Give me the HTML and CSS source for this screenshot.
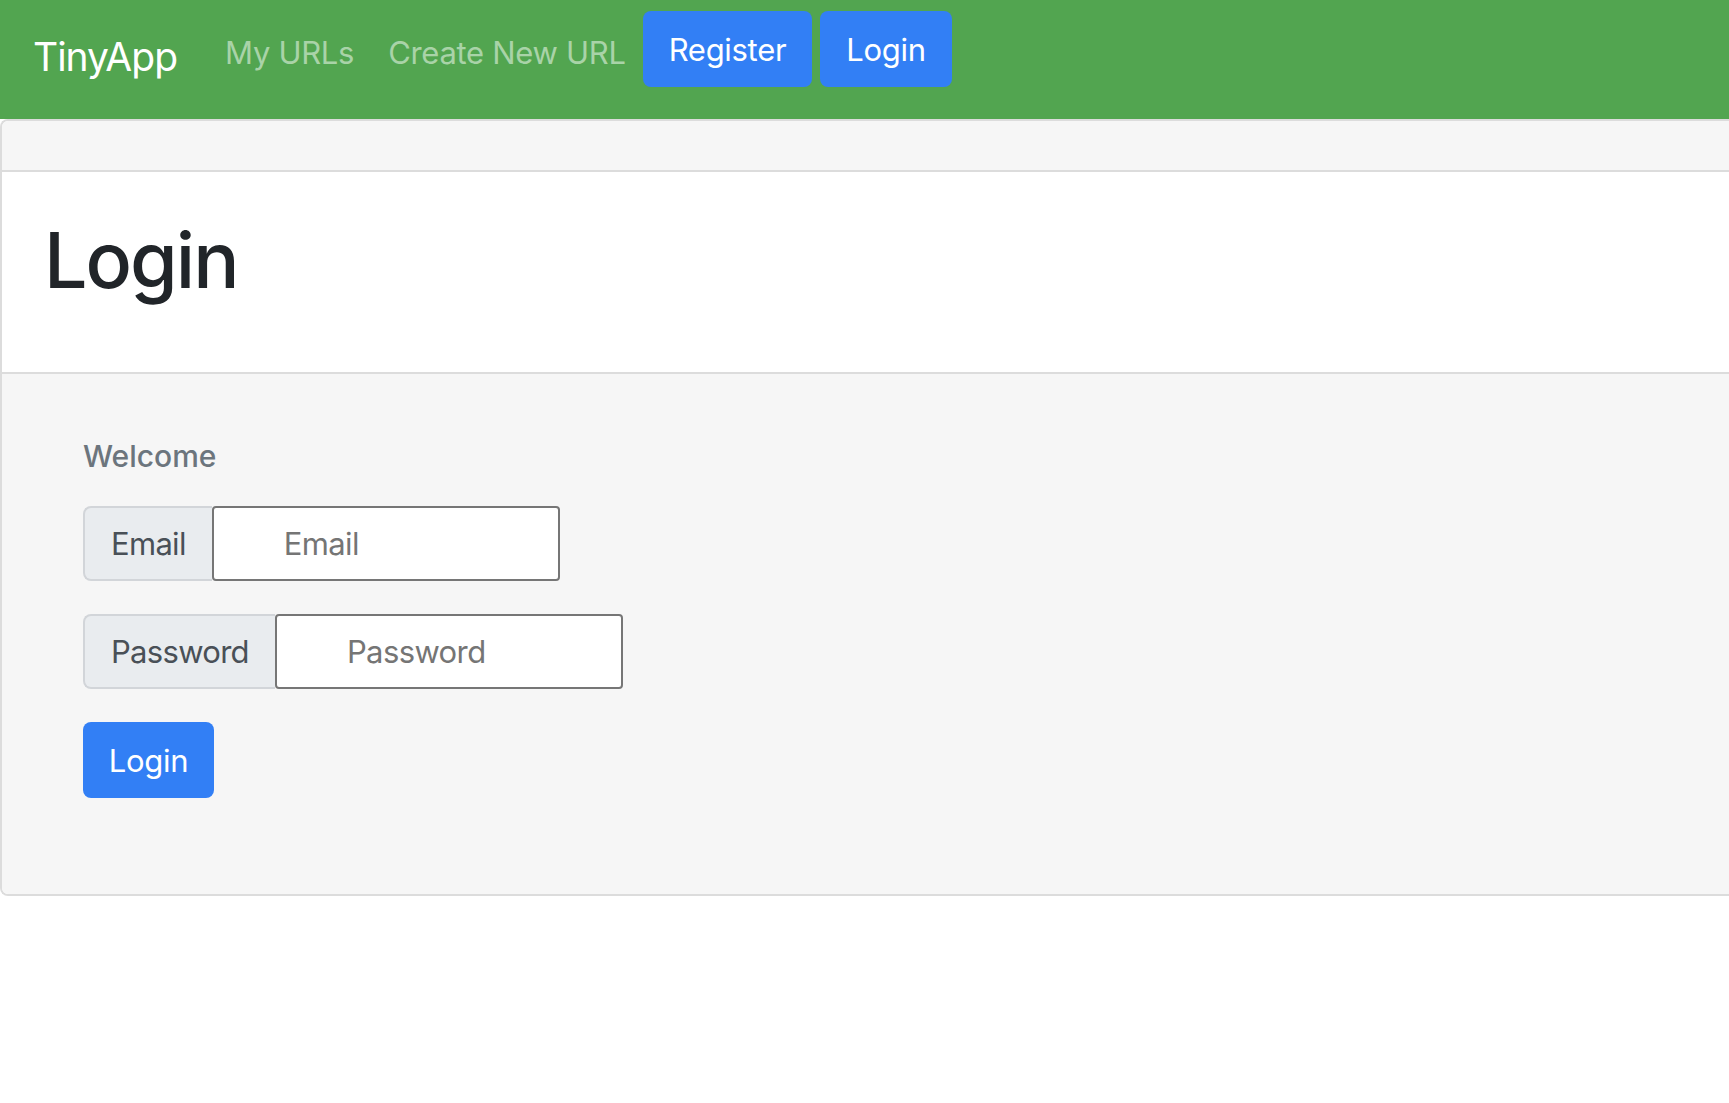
FILE: index.html
```html
<!DOCTYPE html>
<html lang="en">
<head>
<meta charset="utf-8">
<title>TinyApp - Login</title>
<link rel="stylesheet" href="styles.css">
</head>
<body>
<nav class="navbar">
  <a class="brand" href="#">TinyApp</a>
  <div class="nav-links">
    <a class="nav-link" href="#">My URLs</a>
    <a class="nav-link" href="#">Create New URL</a>
  </div>
  <div class="nav-actions">
    <a class="btn btn-primary" href="#">Register</a>
    <a class="btn btn-primary" href="#">Login</a>
  </div>
</nav>
<main class="card">
  <div class="card-header"></div>
  <div class="card-body">
    <h1 class="title">Login</h1>
  </div>
  <div class="card-footer">
    <h6 class="subtitle">Welcome</h6>
    <form class="login-form">
      <div class="input-group">
        <span class="input-label">Email</span>
        <input class="input-field" type="text" placeholder="Email">
      </div>
      <div class="input-group">
        <span class="input-label">Password</span>
        <input class="input-field" type="password" placeholder="Password">
      </div>
      <button class="btn btn-primary btn-submit" type="submit">Login</button>
    </form>
  </div>
</main>
</body>
</html>
```

FILE: styles.css
```css
* { box-sizing: border-box; }

body {
  margin: 0;
  font-family: Inter, "Noto Sans", sans-serif;
  color: #212529;
  background: #ffffff;
}

a { text-decoration: none; }

.navbar {
  display: flex;
  align-items: flex-start;
  height: 119px;
  background: #52a550;
  padding: 11px 0 0 33px;
}

.brand {
  color: #ffffff;
  font-size: 39px;
  letter-spacing: -1px;
  line-height: 48px;
  margin-top: 22px;
  margin-right: 31px;
}

.nav-links {
  display: flex;
}

.nav-link {
  color: #a9d3a8;
  font-size: 31px;
  letter-spacing: -0.3px;
  line-height: 40px;
  padding: 22px 17px 0;
}

.nav-actions {
  display: flex;
  gap: 8px;
}

.btn {
  display: inline-flex;
  align-items: center;
  justify-content: center;
  height: 76px;
  padding: 0 26px;
  border: 0;
  border-radius: 8px;
  font-family: inherit;
  font-size: 31px;
  letter-spacing: -0.3px;
  color: #ffffff;
}

.btn-primary {
  background: #327ff5;
}

.card {
  display: block;
  border: 2px solid #dcdcdc;
  border-right: 0;
  border-top-left-radius: 8px;
  border-bottom-left-radius: 8px;
  overflow: hidden;
  margin: 0;
}

.card-header {
  height: 51px;
  background: #f6f6f6;
  border-bottom: 2px solid #dcdcdc;
}

.card-body {
  height: 202px;
  background: #ffffff;
  border-bottom: 2px solid #dcdcdc;
  padding: 0 0 24px 42px;
  display: flex;
  align-items: center;
}

.title {
  margin: 0;
  font-size: 77px;
  font-weight: 500;
  letter-spacing: -2px;
  line-height: 1;
  color: #212529;
}

.card-footer {
  background: #f6f6f6;
  padding: 62px 0 96px 81px;
}

.subtitle {
  margin: 0 0 30px;
  font-size: 30px;
  font-weight: 500;
  line-height: 40px;
  color: #6c757d;
}

.login-form {
  display: flex;
  flex-direction: column;
  align-items: flex-start;
  gap: 33px;
}

.input-group {
  display: flex;
  height: 75px;
}

.input-label {
  display: flex;
  align-items: center;
  padding: 0 26px;
  background: #e9ecef;
  border: 2px solid #d2d5d9;
  border-right: 0;
  border-radius: 8px 0 0 8px;
  font-size: 31px;
  letter-spacing: -0.7px;
  color: #495057;
}

.input-field {
  width: 348px;
  height: 75px;
  border: 2px solid #767676;
  border-radius: 4px;
  background: #ffffff;
  padding: 0 0 0 70px;
  font-family: inherit;
  font-size: 31px;
  letter-spacing: -0.6px;
  color: #495057;
}

.input-field::placeholder {
  color: #757575;
}

.btn-submit {
  width: 131px;
  padding: 0;
}
```
